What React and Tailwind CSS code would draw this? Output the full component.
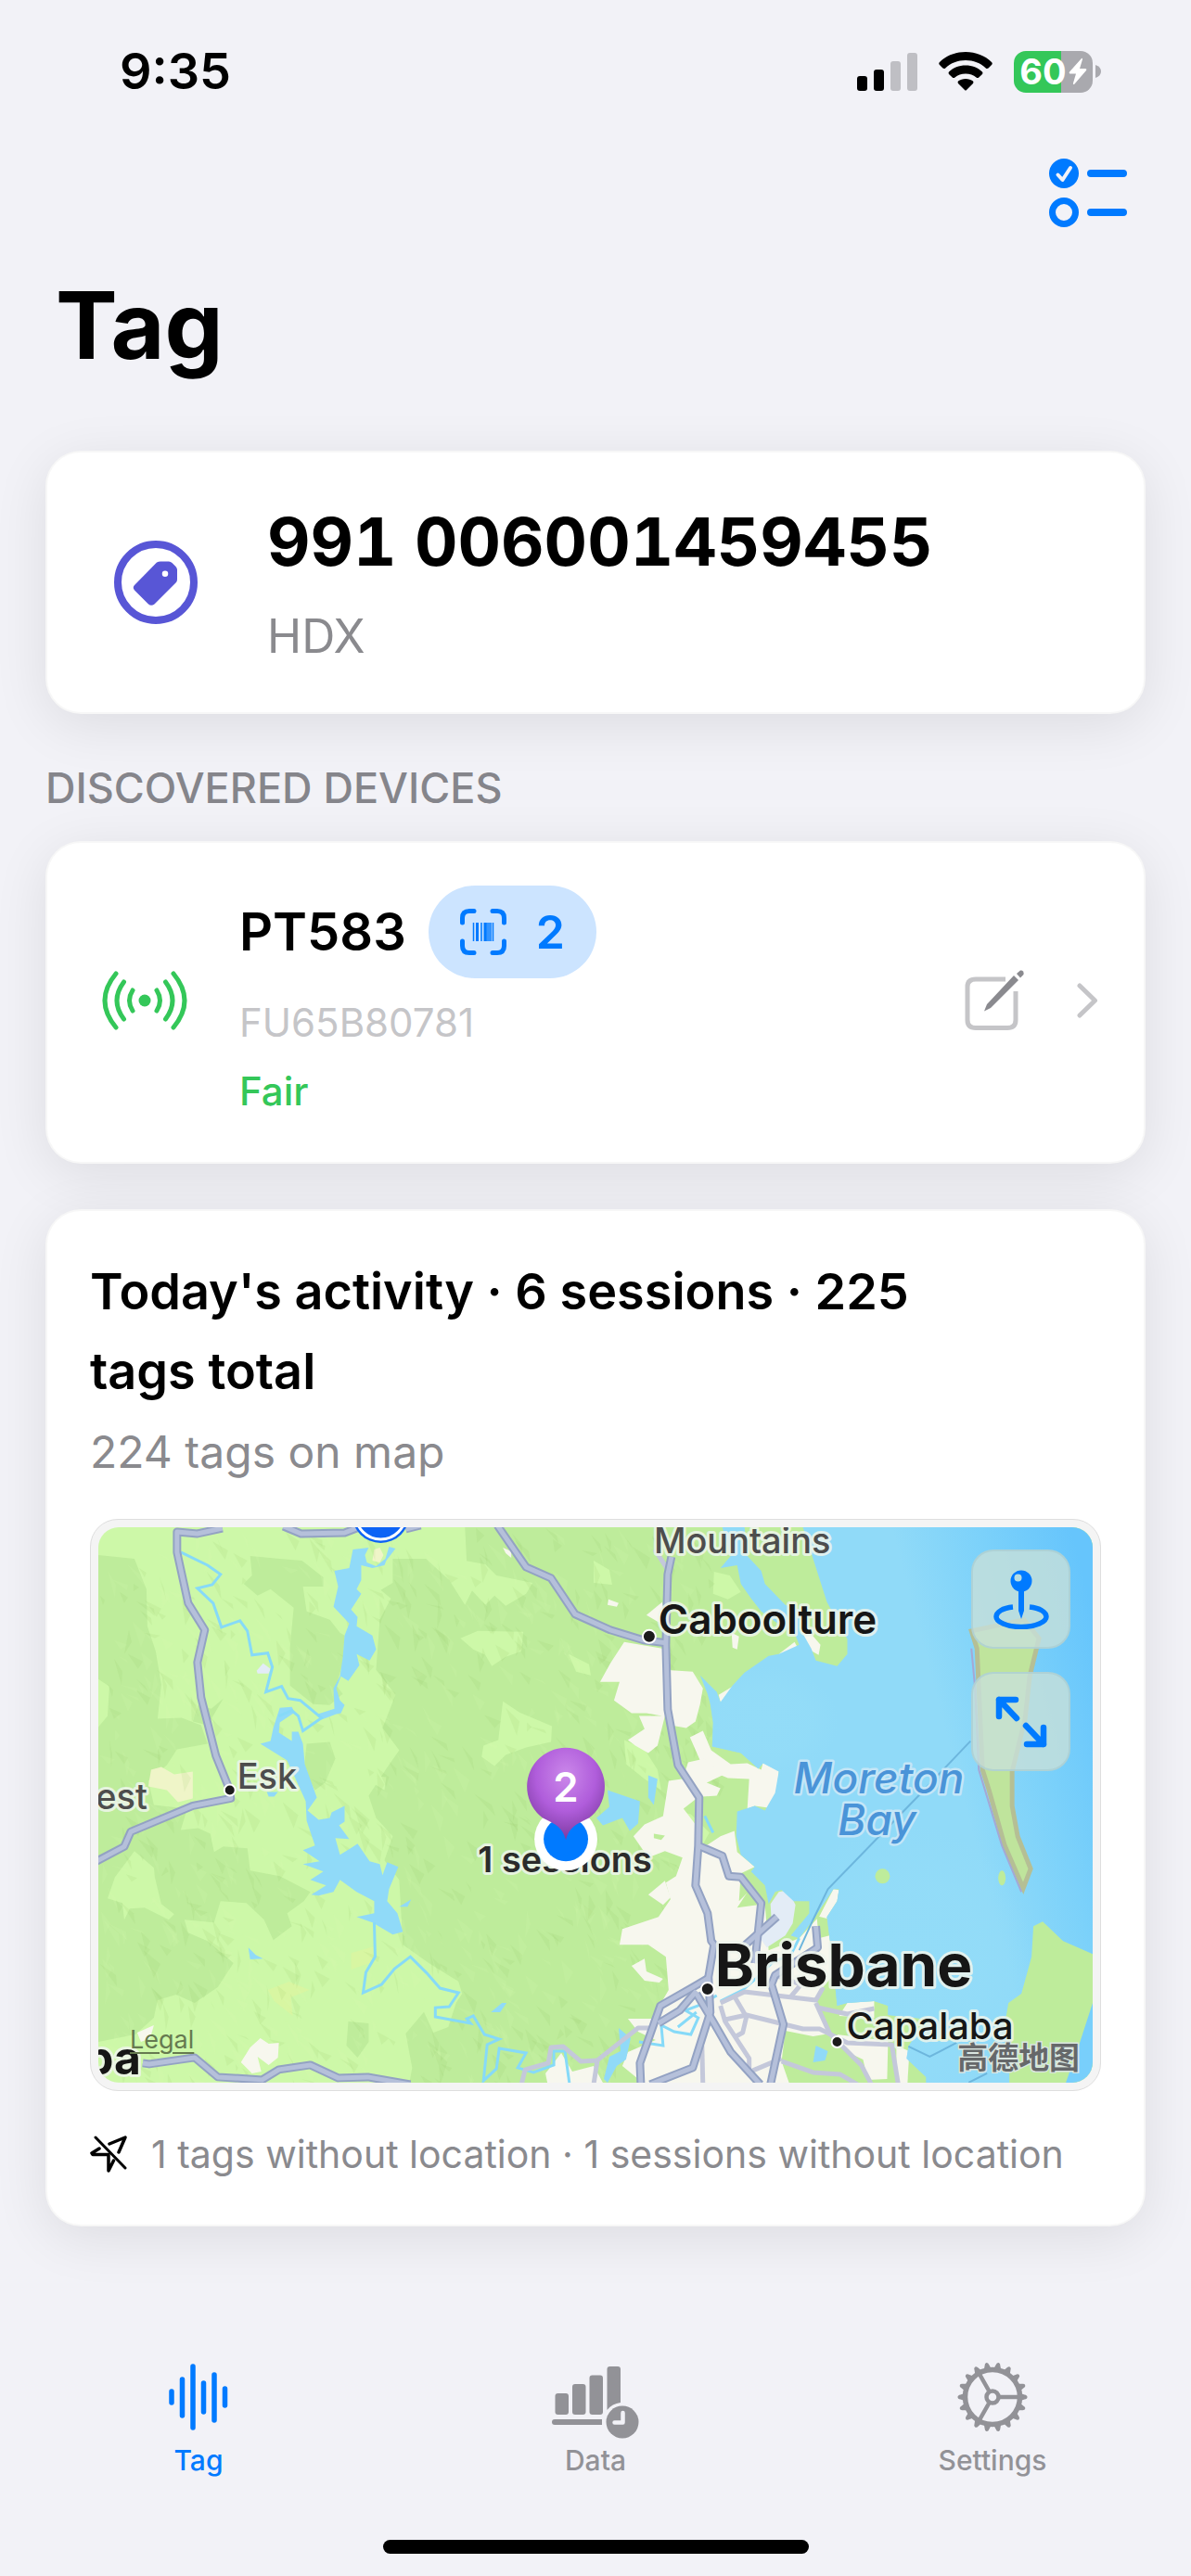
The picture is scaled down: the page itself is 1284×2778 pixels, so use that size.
import { useState } from 'react';

// Small seeded generator so the terrain shading is the same on every render
function makeFacets(count, seed) {
  let s = seed;
  const next = () => {
    s = (s * 16807) % 2147483647;
    return s / 2147483647;
  };
  const facets = [];
  for (let i = 0; i < count; i++) {
    const x = Math.round(next() * 660);
    const y = Math.round(next() * 600);
    const w = 3 + Math.round(next() * 16);
    const h = 6 + Math.round(next() * 24);
    const lean = Math.round(next() * 12 - 8);
    facets.push({
      d: `M${x} ${y}l${w} ${Math.round(h / 2)}l${lean} ${Math.round(h / 2)}z`,
      dark: next() > 0.5,
    });
  }
  return facets;
}

const facets = makeFacets(1100, 4711);

const seaPath =
  'M674 0L683 31 672 44 690 41 694 61 705 77 716 91 731 102 753 117 757 127 735 137 724 139 698 157 685 171 672 189 668 178 650 160 658 180 661 191 664 211 663 237 694 244 713 261 718 255 735 264 731 287 720 306 709 301 690 307 689 334 694 354 709 367 705 372 720 387 724 407 731 394 738 392 751 404 768 404 768 417 748 441 757 444 772 424 794 391 800 391 798 404 787 421 790 445 796 470 796 497 798 517 809 514 838 512 853 517 853 527 900 532 885 545 875 561 873 574 894 594 894 600 984 600 984 561 979 537 983 514 997 504 1008 464 1010 431 1020 426 1042 447 1074 461 1074 0 761 0 772 34 787 81 809 121 809 137 798 150 775 144 770 131 757 108 761 91 742 84 720 61 716 47 701 31 698 0z';

const highways = [
  '134,1 107,7 85,5 85,27 97,82 115,111 107,146 111,184 127,247 142,284 143,293 102,301 35,329 28,345 -4,362',
  '200,-1 219,7 266,6 279,1',
  '332,2 348,-2',
  '431,-2 462,43 489,55 515,94 553,111 589,122 613,125',
  '619,32 615,51 613,127 615,197 626,257 649,292 648,344 645,387 658,417 662,447 665,451 659,486 661,524 642,584 596,602',
  '648,344 674,355 681,377 694,378 716,406 713,434 709,471',
  '733,421 698,452',
  '775,431 777,454 731,484 727,494 740,537 726,602',
  '659,487 642,497 607,517 585,579 586,602',
  '646,501 628,522 605,536',
  '646,504 664,534 683,567 715,602',
  '48,579 55,580 104,573 129,594 177,597 195,586 229,581 259,595 291,594 337,602',
];

const minorRoads = [
  '672,514 698,502 775,511 783,497',
  '687,507 700,529 696,546 687,551',
  '677,532 700,527 761,542 779,542 809,557 857,559 864,602',
  '775,514 790,547 824,581 835,602',
  '777,519 809,526 838,520',
  '738,577 772,589 801,591 820,602',
  '672,517 677,534 703,574 703,587',
  '707,587 738,574',
  '598,541 583,541 539,576 535,602',
  '457,602 461,586 486,579 489,562 502,561 521,577 539,576',
  '748,507 759,494 731,484',
  '652,560 653,602',
  '601,24 615,46',
];

const rivers = [
  '89,27 118,41 132,51 123,62 107,66 124,82 133,108 153,101 161,112 166,138 183,136 188,151 181,178 198,172 205,185 218,187 241,206 221,220 216,204 209,198 195,204',
  '298,427 299,464 289,481 286,503 306,494 320,477 337,464 355,482 369,498 389,503 379,518 364,519 364,529 402,536 398,531 405,528 417,548 433,553 420,559 416,598 430,585 433,563 462,568 453,584 470,589 492,581 492,566 504,566 509,602',
];

const towns = [
  { x: 142, y: 284, r: 6 },
  { x: 595, y: 118, r: 7 },
  { x: 658, y: 499, r: 7 },
  { x: 798, y: 556, r: 6 },
];

function MapDrawing() {
  return (
    <svg
      viewBox="0 0 1074 600"
      className="block w-full h-auto font-[Inter,'Noto_Sans_CJK_SC',sans-serif]"
      role="img"
      aria-label="Session map"
    >
      <defs>
        <linearGradient id="sea" x1="0.6" y1="0.3" x2="1" y2="0.15">
          <stop offset="0" stopColor="#90daf8" />
          <stop offset="0.5" stopColor="#7bd1fa" />
          <stop offset="1" stopColor="#66c5fc" />
        </linearGradient>
        <radialGradient id="shallow">
          <stop offset="0" stopColor="#93dcf8" />
          <stop offset="0.6" stopColor="#93dcf8" stopOpacity="0.8" />
          <stop offset="1" stopColor="#93dcf8" stopOpacity="0" />
        </radialGradient>
        <radialGradient id="pin" cx="0.5" cy="0.3" r="0.7">
          <stop offset="0" stopColor="#cb88ea" />
          <stop offset="0.55" stopColor="#b05ddb" />
          <stop offset="1" stopColor="#7c3aa0" />
        </radialGradient>
        <clipPath id="seaClip">
          <path d={seaPath} />
        </clipPath>
      </defs>

      {/* Land */}
      <rect width="1074" height="600" fill="#cdf8a8" />
      <g fill="#beec9b">
        <path d="M0 30L39 34 52 67 53 107 62 134 68 170 64 207 90 206 111 214 118 234 85 240 74 257 54 274 60 300 96 304 89 327 108 325 121 331 125 351 135 345 161 347 164 371 196 377 229 394 222 404 204 417 209 431 189 446 179 424 160 406 132 404 125 427 93 424 97 438 118 447 146 471 129 497 104 514 84 505 64 511 60 530 40 548 0 556z" />
        <path d="M164 31L196 34 220 36 243 54 243 64 221 64 225 91 250 100 261 114 266 117 264 147 257 171 264 180 250 192 232 191 207 171 207 130 211 87 186 67 172 74 157 61 166 52z" />
        <path d="M225 234L250 232 256 250 245 276 234 284 222 262z" />
        <path d="M270 534L292 536 292 556 280 573 268 560z" />
        <path d="M318 34L354 34 379 57 396 84 408 60 398 40 396 0 1074 0 1074 600 336 600 339 584 332 547 354 521 371 537 393 504 389 491 357 471 329 451 325 381 309 360 318 334 300 314 292 290 311 261 325 241 307 217 321 181 300 154 304 100 316 77 305 68 318 60z" />
        <path d="M118 214L135 185 122 196 108 192 102 210z" />
      </g>
      <g fill="#cdf8a8">
        <path d="M39 350L60 368 61 378 68 407 82 418 76 424 50 411 34 412 28 424 26 406 10 401 18 378z" />
        <path d="M0 164L12 172 10 204 0 216z" />
        <path d="M396 36L418 40 430 52 469 60 462 72 440 85 428 74 418 84 396 60z" />
        <path d="M391 120L410 112 459 113 457 134 440 140 425 150 418 138 405 132z" />
        <path d="M437 188L455 200 490 215 489 232 462 238 440 246 428 258 414 248 416 236 432 230z" />
        <path d="M508 137L530 148 532 160 516 156z" />
        <path d="M295 268L311 270 309 284 296 276z" />
        <path d="M360 478L388 490 391 500 378 540 362 546 350 520z" />
        <path d="M535 36L552 46 555 62 535 60z" />
        <path d="M665 48L682 52 694 70 680 78 664 72z" />
        <path d="M568 230L590 240 604 262 608 284 590 272 570 256z" />
        <path d="M615 304L640 310 660 330 650 348 636 352 624 330z" />
        <path d="M664 182L672 196 668 204z" />
      </g>
      <g fill="#eff5c8">
        <path d="M57 262L68 259 82 267 102 264 102 293 86 297 74 284 54 280z" />
        <path d="M298 24L304 22 308 30 304 38 296 36z" />
      </g>
      <g fill="#d8f6a2">
        <path d="M273 460L297 453 296 470 273 478z" />
        <path d="M183 500L206 491 228 500 208 508 210 528 190 512z" />
      </g>

      {/* Terrain shading */}
      {facets.map((f) => (
        <path key={f.d} d={f.d} fill={f.dark ? '#86b95c' : '#dcffb8'} opacity={f.dark ? 0.1 : 0.12} />
      ))}

      {/* Built-up areas */}
      <g fill="#f7f7ee">
        <path d="M568 124L609 131 611 154 642 156 653 174 650 191 645 210 635 217 618 214 612 204 604 236 594 244 580 236 572 230 590 218 584 204 609 204 592 201 576 201 557 187 563 167 542 167 553 147z" />
        <path d="M592 95L609 81 615 107 604 102z" />
        <path d="M551 78L562 82 560 86 550 84z" />
        <path d="M437 22L446 26 446 33 440 28z" />
        <path d="M639 227L653 220 662 241 683 256 701 255 716 262 720 246 735 241 735 264 731 304 709 301 701 304 703 272 680 271 668 266 650 252z" />
        <path d="M637 254L655 250 674 268 657 276 672 282 668 290 640 292 630 276z" />
        <path d="M685 172L694 164 680 188 672 189 670 181z" />
        <path d="M735 137L752 124 757 133 742 137z" />
        <path d="M757 90L764 96 768 113 780 127 778 138 764 130z" />
        <path d="M684 114L692 118 690 132 685 130z" />
        <path d="M616 274L630 272 650 290 632 304 645 321 646 351 672 334 687 328 690 351 709 367 694 374 712 390 700 396 690 411 720 407 724 457 757 444 779 420 794 391 800 392 798 404 787 421 790 445 794 484 779 501 775 511 790 547 772 550 742 544 738 577 746 600 588 600 566 582 572 567 602 554 583 545 572 531 598 531 616 500 613 464 594 451 563 451 566 434 605 421 618 402 613 384 624 377 631 357 612 350 594 357 578 334 590 321 610 312z" />
        <path d="M594 397L612 382 618 400 610 408z" />
        <path d="M576 474L590 466 592 480 610 488 606 492 590 490z" />
        <path d="M798 548L853 555 852 596 831 597 826 575 809 567z" />
        <path d="M862 560L876 566 874 600 862 600z" />
        <path d="M809 514L838 512 838 530 800 528z" />
        <path d="M154 578L164 562 175 552 184 558 195 557 194 573 184 581 172 572 176 588 166 590z" />
        <path d="M42 546L60 538 56 552 46 556z" />
        <path d="M483 590L500 568 512 588 535 582 545 600 485 600z" />
      </g>
      <g fill="#beec9b">
        <path d="M751 404L768 404 766 424 754 420zM694 374L716 380 720 400 700 396 692 404zM600 331L612 333 608 338 600 336z" />
        <path d="M776 420L792 424 794 440 778 444z" />
      </g>
      <path d="M735 394L745 392 753 408 750 428 742 441 722 454 712 440 727 424 726 407z" fill="#e3ecf6" />
      <path d="M171 155L178 147 186 153 184 158 172 158z" fill="#e3ecf6" />

      {/* Water */}
      <g fill="#90daf8">
        <path d="M275 24L292 22 288 30 290 38 300 42 310 34 314 21 321 23 311 36 309 41 296 44 284 41 284 57 279 67 284 72 273 89 280 97 279 107 296 117 300 132 293 144 279 137 282 149 270 166 262 161 257 174 261 187 266 192 262 201 257 202 241 208 218 188 237 202 255 196 254 174 261 161 264 141 266 117 271 104 254 86 259 64 255 47 271 44z" />
        <path d="M196 195L209 194 212 200 196 211 195 222 209 231 209 221 216 221 221 234 223 256 236 292 226 306 238 316 250 314 252 308 266 301 266 318 260 322 271 337 256 336 261 354 274 346 280 342 293 361 304 364 307 376 312 362 324 367 314 391 312 404 323 417 329 437 318 440 296 427 279 421 298 417 298 404 279 394 261 381 254 394 238 398 230 397 246 387 229 381 243 372 221 364 239 361 221 349 234 344 225 317 224 296 204 252 175 234 186 231 189 217z" />
        <path d="M162 454L170 462 178 466 164 467zM325 410L338 402 334 410zM424 524L436 514 441 514 434 524z" />
        <path d="M182 286L194 286 190 291 184 291z" />
        <path d="M550 284L585 296 583 320 574 328 566 314 545 322 538 314 552 302z" />
        <path d="M594 268L604 272 600 300 594 292z" />
        <path d="M562 541L575 552 570 575 560 582 550 600 546 596 552 572 564 566z" />
        <path d="M775 560L788 566 785 576 772 578z" />
      </g>
      <path d={seaPath} fill="url(#sea)" />
      <g clipPath="url(#seaClip)">
        <ellipse cx="870" cy="470" rx="140" ry="150" fill="url(#shallow)" />
        <ellipse cx="720" cy="210" rx="80" ry="60" fill="url(#shallow)" />
      </g>
      <path d="M1074 514L1060 557 1045 600 1074 600z" fill="#78cffb" />
      <g fill="#beec9b">
        <circle cx="847" cy="377" r="8" />
        <ellipse cx="976" cy="379" rx="4" ry="8" />
        <path d="M938 540L912 548 905 555 925 554 945 536z" />
      </g>
      <path
        d="M943 112L949 131 951 174 955 262 962 284 979 344 999 390 1007 369 993 334 987 301 987 264 1001 207 1006 161 1016 120 1000 100z"
        fill="#bfe49c"
        stroke="#b5bf95"
        strokeWidth="5"
      />
      <path d="M943 131L947 174 951 262 976 344 997 394" fill="none" stroke="#a5a8d4" strokeWidth="2" />
      <path
        d="M942 231L885 291 788 391 772 424 757 457M875 561L898 572 927 557M960 590L940 600"
        fill="none"
        stroke="#6db6dd"
        strokeWidth="2"
      />
      <g fill="none" stroke="#86daf8" strokeWidth="3">
        {rivers.map((points) => (
          <polyline key={points} points={points} />
        ))}
        <path d="M757 444L748 462 728 470 712 486 696 500 672 512M668 506L650 516 634 522 648 530 640 548 622 545 608 538 610 560 584 556M646 524L626 540M655 312L664 330" />
      </g>

      {/* Roads */}
      <g fill="none" stroke="#c4c8da" strokeWidth="5" strokeLinejoin="round">
        {minorRoads.map((points) => (
          <polyline key={points} points={points} />
        ))}
      </g>
      <g fill="none" stroke="#93a2c3" strokeWidth="9" strokeLinejoin="round">
        {highways.map((points) => (
          <polyline key={points} points={points} />
        ))}
      </g>
      <g fill="none" stroke="#b5c0da" strokeWidth="5" strokeLinejoin="round">
        {highways.map((points) => (
          <polyline key={points} points={points} />
        ))}
      </g>

      {/* Place names */}
      {towns.map((t) => (
        <circle key={t.x} cx={t.x} cy={t.y} r={t.r} fill="#1c1c1c" stroke="#fff" strokeWidth="2" />
      ))}
      <g stroke="#eef5ec" strokeOpacity="0.85" strokeWidth="6" strokeLinejoin="round" className="[paint-order:stroke]">
        <g fill="#4d4d4d" fontSize="38" fontWeight="500">
          <text x="600" y="28">Mountains</text>
          <text x="150" y="283">Esk</text>
          <text x="53" y="305" textAnchor="end">est</text>
        </g>
        <text x="605" y="115" fontSize="44" fontWeight="600" fill="#161616">Caboolture</text>
        <text x="666" y="496" fontSize="64" fontWeight="700" fill="#161616">Brisbane</text>
        <text x="808" y="553" fontSize="40" fontWeight="500" fill="#161616">Capalaba</text>
        <text x="46" y="591" fontSize="50" fontWeight="700" fill="#161616" textAnchor="end">ba</text>
        <text x="504" y="373" fontSize="38" fontWeight="600" fill="#2b2b2b" textAnchor="middle">1 sessions</text>
      </g>
      <g
        fontSize="46"
        fontWeight="500"
        fontStyle="italic"
        fill="#4a94d8"
        stroke="#c5e6f7"
        strokeWidth="5"
        strokeLinejoin="round"
        textAnchor="middle"
        className="[paint-order:stroke]"
      >
        <text x="843" y="288">Moreton</text>
        <text x="841" y="333">Bay</text>
      </g>
      <text
        x="1060"
        y="585"
        fontSize="33"
        fontWeight="700"
        fill="#66686a"
        stroke="#d9e5e0"
        strokeWidth="3"
        textAnchor="end"
        className="[paint-order:stroke]"
      >
        高德地图
      </text>

      {/* Markers */}
      <circle cx="305" cy="-14" r="31" fill="#0d63f5" />
      <circle cx="305" cy="-14" r="27" fill="none" stroke="#fff" strokeWidth="3" />
      <circle cx="505" cy="337" r="34" fill="#fff" />
      <circle cx="505" cy="337" r="24" fill="#007aff" />
      <path
        d="M505 338C501 322 491 320 480 314A42 42 0 1 1 530 314C519 320 509 322 505 338z"
        fill="url(#pin)"
      />
      <text x="505" y="297" fontSize="44" fontWeight="600" fill="#fff" textAnchor="middle">2</text>
    </svg>
  );
}

function SignalIcon() {
  return (
    <svg viewBox="0 0 65 41" className="w-[65px] h-[41px]" aria-hidden="true">
      <rect x="0" y="25" width="11" height="16" rx="3" />
      <rect x="18" y="18" width="11" height="23" rx="3" />
      <rect x="36" y="9" width="11" height="32" rx="3" fill="#bfbfc4" />
      <rect x="54" y="0" width="11" height="41" rx="3" fill="#bfbfc4" />
    </svg>
  );
}

function WifiIcon() {
  return (
    <svg viewBox="0 0 58 42" className="w-[58px] h-[42px]" aria-hidden="true">
      <path d="M29 0C40 0 50 4 57 11Q58.500 12.500 57 14L53.500 17.500Q52 18.500 50.800 17.400C45 12 37.500 9 29 9S13 12 7.200 17.400Q6 18.500 4.500 17.500L1 14Q-.5 12.500 1 11C8 4 18 0 29 0z" />
      <path d="M29 14.500C36 14.500 42.500 17 47 21.500Q48 22.700 47 24L43 27.700Q41.800 28.600 40.500 27.500C37.500 25 33.500 23.500 29 23.500S20.500 25 17.500 27.500Q16.200 28.600 15 27.700L11 24Q10 22.700 11 21.500C15.500 17 22 14.500 29 14.500z" />
      <path d="M29 29C32 29 35 30 37 31.600Q38 32.800 37 34L30 41Q29 42 28 41L21 34Q20 32.800 21 31.600C23 30 26 29 29 29z" />
    </svg>
  );
}

function Battery() {
  return (
    <div className="flex items-center gap-[3px]">
      <div className="flex items-center justify-center gap-[2px] w-[85px] h-[45px] rounded-[13px] text-white bg-[linear-gradient(90deg,#34c759_60%,#a9a9ae_60%)]">
        <span className="text-[38px] leading-[45px] font-bold">60</span>
        <svg viewBox="0 0 20 30" className="w-5 h-[30px]" fill="currentColor" aria-hidden="true">
          <path d="M13.500 1.500Q15 0 15 2L12 12H18Q20 12 19 14L6.500 28.500Q4.500 30 5 27.500L8 17.500H1.500Q0 17 1 15.500z" />
        </svg>
      </div>
      <svg viewBox="0 0 6 14" className="w-[6px] h-[14px]" fill="#a9a9ae" aria-hidden="true">
        <path d="M0 0Q6 2 6 7T0 14z" />
      </svg>
    </div>
  );
}

function ChecklistIcon() {
  return (
    <svg viewBox="0 0 84 74" className="w-[84px] h-[74px]" fill="none" stroke="#007aff" aria-hidden="true">
      <circle cx="16" cy="16" r="16" fill="#007aff" stroke="none" />
      <path d="M9.500 17.500L14.500 23L23 10" stroke="#f2f2f7" strokeWidth="4" strokeLinecap="round" strokeLinejoin="round" />
      <circle cx="16" cy="58" r="12.500" strokeWidth="7" />
      <path d="M45 16H80M45 58H80" strokeWidth="8" strokeLinecap="round" />
    </svg>
  );
}

function TagIcon() {
  return (
    <svg viewBox="0 0 90 90" className="w-[90px] h-[90px] shrink-0" aria-hidden="true">
      <circle cx="45" cy="45" r="41" fill="none" stroke="#5856d6" strokeWidth="8" />
      <path
        fillRule="evenodd"
        fill="#5856d6"
        d="M46 23.500Q48 22.500 50 22.500H59Q61 22.500 62.500 24L66.500 28Q68 29.500 68 31.500V42Q68 44 66.500 45.500L43.500 68.500Q40 71 37 68.500L22 53.500Q19.500 50.500 22 48zM55 32.500A3.200 3.200 0 1 0 55 39A3.200 3.200 0 1 0 55 32.500z"
      />
    </svg>
  );
}

function WavesIcon() {
  return (
    <svg
      viewBox="0 0 92 64"
      className="w-[92px] h-16 shrink-0"
      fill="none"
      stroke="#34c759"
      strokeWidth="5"
      strokeLinecap="round"
      aria-hidden="true"
    >
      <circle cx="46" cy="32" r="6.500" fill="#34c759" stroke="none" />
      <path d="M33 21Q26 32 33 43M59 21Q66 32 59 43" />
      <path d="M23.500 12Q8.500 32 23.500 52M68.500 12Q83.500 32 68.500 52" />
      <path d="M15 3Q-9 32 15 61M77 3Q101 32 77 61" />
    </svg>
  );
}

function BarcodeIcon() {
  return (
    <svg viewBox="0 0 50 50" className="w-[50px] h-[50px]" fill="none" stroke="#007aff" aria-hidden="true">
      <path
        d="M2.500 15V10Q2.500 2.500 10 2.500H15M35 2.500H40Q47.500 2.500 47.500 10V15M47.500 35V40Q47.500 47.500 40 47.500H35M15 47.500H10Q2.500 47.500 2.500 40V35"
        strokeWidth="5"
        strokeLinecap="round"
      />
      <path d="M14.500 15V35M23 15V35M31 15V35M35.500 15V35" strokeWidth="1.500" />
      <path d="M18.500 15V35M27 15V35" strokeWidth="3" />
      <path d="M29 15V35M33 15V35" strokeWidth="1.500" />
    </svg>
  );
}

function EditIcon() {
  return (
    <svg viewBox="0 0 65 66" className="w-[65px] h-[66px]" fill="none" aria-hidden="true">
      <path
        d="M44 10H12Q3 10 3 18V54Q3 62.500 12 62.500H46Q55 62.500 55 54V23"
        stroke="#c5c5c8"
        strokeWidth="5"
      />
      <path d="M53 6L58 11L28 41L21 44.500L24 37z" fill="#8a8a8f" />
      <path d="M56 4L60 .5Q62 0 63 1.500T63.500 5L60 8.500z" fill="#8a8a8f" />
    </svg>
  );
}

function PinIcon() {
  return (
    <svg viewBox="0 0 60 64" className="w-[60px] h-16" aria-hidden="true">
      <path d="M21 40C10 41 3 45.500 3 50.500C3 56 14 61.500 30 61.500S57 56 57 50.500C57 45.500 50 41 39 40" fill="none" stroke="#007aff" strokeWidth="5.500" />
      <path d="M27 20H33V44L30 53L27 44z" fill="#007aff" />
      <circle cx="30" cy="12" r="11.500" fill="#007aff" />
      <circle cx="26.500" cy="8.500" r="4" fill="#b9dde2" />
    </svg>
  );
}

function ExpandIcon() {
  return (
    <svg
      viewBox="0 0 56 56"
      className="w-14 h-14"
      fill="none"
      stroke="#007aff"
      strokeWidth="6.500"
      strokeLinecap="round"
      strokeLinejoin="round"
      aria-hidden="true"
    >
      <path d="M22 4H4V22M4 4L23 24M34 52H52V34M52 52L33 32" />
    </svg>
  );
}

function LocationSlashIcon() {
  return (
    <svg
      viewBox="0 0 40 40"
      className="w-10 h-10 shrink-0"
      fill="none"
      stroke="#000"
      strokeWidth="3.500"
      strokeLinecap="round"
      strokeLinejoin="round"
      aria-hidden="true"
    >
      <path d="M21 9L38 2L31 18M10 14L2 19L3 20.500H20V38L25.500 27" />
      <path d="M6 2L38 35" strokeWidth="3" />
    </svg>
  );
}

function WaveformIcon() {
  return (
    <svg
      viewBox="0 0 64 72"
      className="w-16 h-[72px]"
      fill="none"
      stroke="currentColor"
      strokeWidth="5.500"
      strokeLinecap="round"
      aria-hidden="true"
    >
      <path d="M3 30V42M14.500 17V56M26 3V69M37.500 21V52M49 12V61M60.500 27V45" />
    </svg>
  );
}

function DataIcon() {
  return (
    <svg viewBox="0 -12 94 90" className="w-[94px] h-[90px]" fill="currentColor" aria-hidden="true">
      <rect x="3.500" y="29" width="14.500" height="23" rx="3" />
      <rect x="22" y="19" width="14.500" height="33" rx="3" />
      <rect x="40.500" y="9.500" width="14.500" height="42.500" rx="3" />
      <path d="M59.500 3Q59.500 0 62.500 0H71Q74 0 74 3V39Q65 40 59.500 47z" />
      <path d="M3 57H54V63H3Q0 63 0 60T3 57z" />
      <circle cx="76" cy="60" r="17.500" />
      <path d="M76.500 50V60.500H67.500" fill="none" stroke="#f2f2f7" strokeWidth="4.500" strokeLinecap="round" strokeLinejoin="round" />
    </svg>
  );
}

const gearTeeth = Array.from({ length: 18 }, (_, i) => i * 20);

function GearIcon() {
  return (
    <svg viewBox="-38 -38 76 76" className="w-[76px] h-[76px]" fill="none" stroke="currentColor" aria-hidden="true">
      {gearTeeth.map((angle) => (
        <path key={angle} d="M29 -4.500L34.500 -2.500Q37.500 -2 37.500 0T34.500 2.500L29 4.500z" fill="currentColor" stroke="none" transform={`rotate(${angle})`} />
      ))}
      <circle r="29.500" strokeWidth="5.500" />
      <circle r="6.500" strokeWidth="4.500" />
      <path d="M8 0H29M-4 -7L-14.500 -25.500M-4 7L-14.500 25.500" strokeWidth="4.500" />
    </svg>
  );
}

const tabs = [
  { id: 'tag', label: 'Tag', Icon: WaveformIcon },
  { id: 'data', label: 'Data', Icon: DataIcon },
  { id: 'settings', label: 'Settings', Icon: GearIcon },
];

const cardClass =
  'bg-white rounded-[38px] border-2 border-black/[0.03] shadow-[0_12px_60px_rgba(0,0,0,0.09)]';
const mapButtonClass =
  'flex items-center justify-center w-[107px] h-[107px] rounded-[24px] border-2 border-[#a8cdd2]/70 bg-[#c8e0da]/80';

export default function App() {
  const [activeTab, setActiveTab] = useState('tag');

  return (
    <div className="min-h-screen flex flex-col overflow-hidden bg-[#f2f2f7] text-black font-[Inter,'Noto_Sans_CJK_SC',sans-serif]">
      {/* Status bar */}
      <div className="flex items-center justify-between mt-11 pl-[129px] pr-[97px] h-[66px]">
        <span className="text-[54px] leading-[66px] font-semibold">9:35</span>
        <div className="flex items-center gap-[23px]">
          <SignalIcon />
          <WifiIcon />
          <Battery />
        </div>
      </div>

      {/* Header */}
      <header className="mt-[61px]">
        <div className="flex justify-end pr-[69px]">
          <button type="button" aria-label="Select tags">
            <ChecklistIcon />
          </button>
        </div>
        <h1 className="mt-[46px] pl-[60px] text-[100px] leading-[120px] font-bold">Tag</h1>
      </header>

      <main className="mt-[75px] px-[49px]">
        {/* Current tag */}
        <section className={`${cardClass} flex items-center gap-[75px] px-[72px] py-[52px]`}>
          <TagIcon />
          <div className="flex flex-col gap-7">
            <p className="text-[72px] leading-[88px] font-bold tabular-nums">991 006001459455</p>
            <p className="text-[50px] leading-[60px] text-[#8a8a8e]">HDX</p>
          </div>
        </section>

        {/* Devices */}
        <h2 className="mt-[54px] text-[45px] leading-[52px] font-medium text-[#85858b]">DISCOVERED DEVICES</h2>
        <section className={`${cardClass} mt-[31px] flex items-center pl-[59px] pr-[49px] pt-[46px] pb-[50px]`}>
          <WavesIcon />
          <div className="flex-1 flex flex-col gap-[22px] ml-14">
            <div className="flex items-center gap-6">
              <h3 className="text-[56px] leading-[68px] font-semibold">PT583</h3>
              <span className="flex items-center gap-8 h-[100px] px-[34px] rounded-[50px] bg-[#cce4ff] text-[#007aff] text-[50px] leading-[60px] font-semibold">
                <BarcodeIcon />
                2
              </span>
            </div>
            <p className="text-[42px] leading-[52px] text-[#c5c5c8]">FU65B80781</p>
            <p className="text-[42px] leading-[52px] font-medium text-[#34c759]">Fair</p>
          </div>
          <div className="flex items-center gap-14">
            <button type="button" aria-label="Rename device">
              <EditIcon />
            </button>
            <button type="button" aria-label="Open device">
              <svg viewBox="0 0 23 38" className="w-[23px] h-[38px]" fill="none" aria-hidden="true">
                <path d="M3 3L19.500 19L3 35" stroke="#c5c5c8" strokeWidth="5" strokeLinecap="round" strokeLinejoin="round" />
              </svg>
            </button>
          </div>
        </section>

        {/* Activity */}
        <section className={`${cardClass} mt-[49px] px-[46px] pt-11 pb-[50px]`}>
          <h3 className="pr-36 text-[54px] leading-[86px] font-semibold">
            Today's activity · 6 sessions · 225 tags total
          </h3>
          <p className="mt-[14px] text-[48px] leading-[60px] text-[#8a8a8e]">224 tags on map</p>

          <div className="mt-[42px] p-2 border border-[#dedede] rounded-[30px] bg-[#f4f4f4]">
            <div className="relative overflow-hidden rounded-[22px]">
              <MapDrawing />
              <div className="absolute top-6 right-6 flex flex-col gap-[25px]">
                <button type="button" className={mapButtonClass} aria-label="Center on pin">
                  <PinIcon />
                </button>
                <button type="button" className={mapButtonClass} aria-label="Expand map">
                  <ExpandIcon />
                </button>
              </div>
              <a
                href="#legal"
                className="absolute left-[34px] bottom-[30px] text-[27px] leading-8 text-[#667a50] underline decoration-2 underline-offset-4"
              >
                Legal
              </a>
            </div>
          </div>

          <div className="mt-[42px] flex items-center gap-[26px]">
            <LocationSlashIcon />
            <p className="text-[41px] leading-[52px] text-[#8a8a8e]">
              1 tags without location · 1 sessions without location
            </p>
          </div>
        </section>
      </main>

      {/* Tab bar */}
      <nav className="mt-auto grid grid-cols-3 pt-16">
        {tabs.map(({ id, label, Icon }) => (
          <button
            key={id}
            type="button"
            onClick={() => setActiveTab(id)}
            className={`flex flex-col items-center gap-[10px] ${activeTab === id ? 'text-[#007aff]' : 'text-[#929297]'}`}
          >
            <span className="flex items-center h-20">
              <Icon />
            </span>
            <span className="text-[30px] leading-9 font-medium">{label}</span>
          </button>
        ))}
      </nav>
      <div className="mt-[68px] mb-6 mx-auto w-[459px] h-[15px] rounded-full bg-black" />
    </div>
  );
}
